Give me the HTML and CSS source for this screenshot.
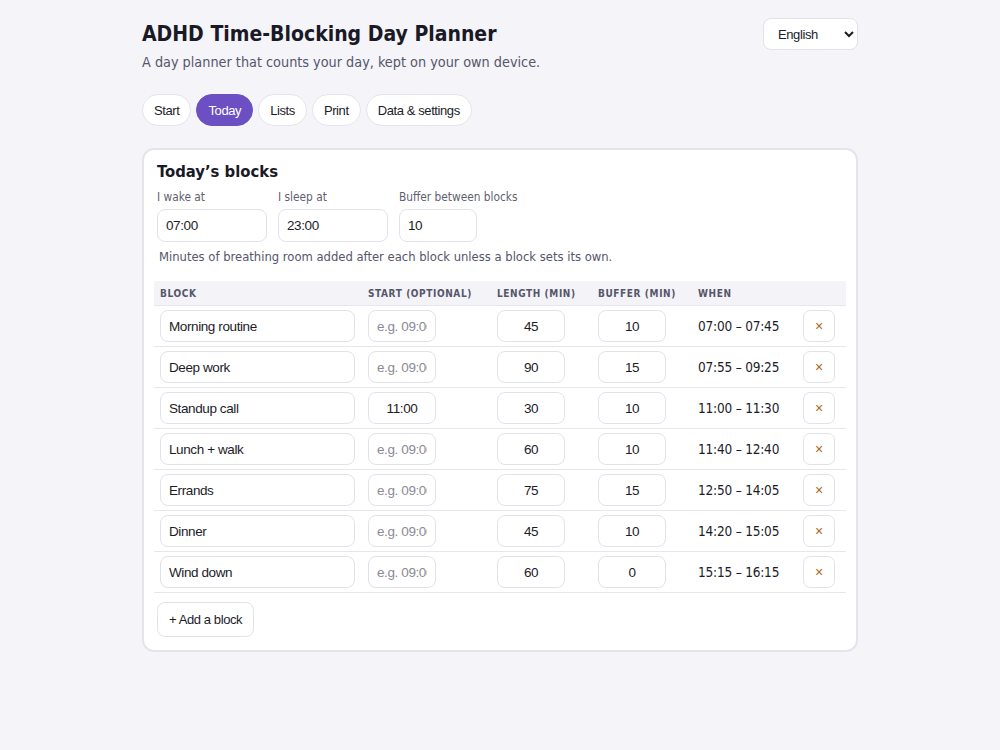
FILE: index.html
```html
<!DOCTYPE html>
<html lang="en">
<head>
    <meta charset="UTF-8">
    <meta name="viewport" content="width=device-width, initial-scale=1.0">
    <title>ADHD Time-Blocking Day Planner</title>
    <link rel="stylesheet" href="styles.css">
</head>
<body>
    <div class="page">
        <header class="top">
            <div>
                <h1>ADHD Time-Blocking Day Planner</h1>
                <p class="tagline">A day planner that counts your day, kept on your own device.</p>
            </div>
            <select class="lang">
                <option>English</option>
            </select>
        </header>

        <nav class="tabs">
            <button class="tab">Start</button>
            <button class="tab active">Today</button>
            <button class="tab">Lists</button>
            <button class="tab">Print</button>
            <button class="tab">Data &amp; settings</button>
        </nav>

        <section class="card">
            <div class="intro">
                <h2>Today’s blocks</h2>
                <div class="day-fields">
                    <label class="field">
                        <span>I wake at</span>
                        <input class="wide" type="text" value="07:00">
                    </label>
                    <label class="field">
                        <span>I sleep at</span>
                        <input class="wide" type="text" value="23:00">
                    </label>
                    <label class="field">
                        <span>Buffer between blocks</span>
                        <input class="short" type="text" value="10">
                    </label>
                </div>
                <p class="hint">Minutes of breathing room added after each block unless a block sets its own.</p>
            </div>

            <table class="blocks">
                <colgroup>
                    <col style="width: 208px">
                    <col style="width: 129px">
                    <col style="width: 101px">
                    <col style="width: 100px">
                    <col style="width: 105px">
                    <col style="width: 49px">
                </colgroup>
                <thead>
                    <tr>
                        <th>Block</th>
                        <th>Start (optional)</th>
                        <th>Length (min)</th>
                        <th>Buffer (min)</th>
                        <th>When</th>
                        <th></th>
                    </tr>
                </thead>
                <tbody id="rows"></tbody>
            </table>

            <button class="add">+ Add a block</button>
        </section>
    </div>

    <script>
        const blocks = [
            { name: 'Morning routine', start: '', length: 45, buffer: 10, when: '07:00 – 07:45' },
            { name: 'Deep work', start: '', length: 90, buffer: 15, when: '07:55 – 09:25' },
            { name: 'Standup call', start: '11:00', length: 30, buffer: 10, when: '11:00 – 11:30' },
            { name: 'Lunch + walk', start: '', length: 60, buffer: 10, when: '11:40 – 12:40' },
            { name: 'Errands', start: '', length: 75, buffer: 15, when: '12:50 – 14:05' },
            { name: 'Dinner', start: '', length: 45, buffer: 10, when: '14:20 – 15:05' },
            { name: 'Wind down', start: '', length: 60, buffer: 0, when: '15:15 – 16:15' }
        ];

        const rows = document.getElementById('rows');
        rows.innerHTML = blocks.map(b => `
            <tr>
                <td><input class="name" type="text" value="${b.name}"></td>
                <td><input class="num" type="text" placeholder="e.g. 09:00" value="${b.start}"></td>
                <td><input class="num" type="text" value="${b.length}"></td>
                <td><input class="num" type="text" value="${b.buffer}"></td>
                <td class="when">${b.when}</td>
                <td><button class="remove">×</button></td>
            </tr>
        `).join('');
    </script>
</body>
</html>
```

FILE: styles.css
```css
body {
    margin: 0;
    background: #f4f4f9;
    color: #1c1c28;
    font-family: 'DejaVu Sans Condensed', 'DejaVu Sans', sans-serif;
    font-stretch: condensed;
}
.page {
    width: 716px;
    margin: 0 auto;
    padding-top: 21px;
}
.top {
    display: flex;
    justify-content: space-between;
    align-items: flex-start;
}
h1 {
    font-size: 21px;
    line-height: 26px;
    margin: 0;
    color: #1a1a26;
}
.tagline {
    font-size: 14.3px;
    line-height: 18px;
    margin: 6px 0 0;
    color: #55566a;
}
/* form controls use the Arial-style face */
.lang, .tab, input, .remove, .add {
    font-family: 'Liberation Sans', sans-serif;
    font-stretch: normal;
    font-size: 13px;
    letter-spacing: -0.4px;
    color: #1c1c28;
}
.lang {
    width: 95px;
    height: 32px;
    margin-top: -3px;
    padding: 0 6px 0 10px;
    background: white;
    border: 1px solid #e2e2ea;
    border-radius: 8px;
}
.tabs {
    display: flex;
    gap: 5px;
    margin-top: 23px;
}
.tab {
    height: 32px;
    padding: 0 11px;
    background: white;
    border: 1px solid #e4e4ec;
    border-radius: 16px;
}
.tab.active {
    background: #6c4fc2;
    border-color: #6c4fc2;
    color: white;
}
.card {
    margin-top: 22px;
    background: white;
    border: 2px solid #e4e4ec;
    border-radius: 12px;
    padding: 12px 10px 13px;
}
.intro {
    padding: 0 3px;
}
h2 {
    font-size: 16.5px;
    line-height: 20px;
    margin: 0;
    color: #1a1a26;
}
.day-fields {
    display: flex;
    gap: 11px;
    margin-top: 8px;
}
.field span {
    display: block;
    font-size: 11.8px;
    line-height: 14px;
    color: #5f5f70;
    margin-bottom: 5px;
}
input {
    box-sizing: border-box;
    height: 33px;
    border: 1px solid #e2e2ea;
    border-radius: 8px;
    font-size: 13.5px;
    padding: 0 8px;
    background: white;
}
input::placeholder {
    color: #8a8a96;
}
.wide {
    width: 110px;
}
.short {
    width: 78px;
}
.hint {
    font-size: 12.9px;
    line-height: 16px;
    margin: 7px 0 0 2px;
    color: #55566a;
}
.blocks {
    width: 692px;
    margin-top: 16px;
    border-collapse: collapse;
    table-layout: fixed;
}
.blocks th {
    background: #f3f3f8;
    height: 24px;
    padding: 0 6px;
    text-align: left;
    font-size: 10px;
    letter-spacing: 0.6px;
    text-transform: uppercase;
    color: #55566a;
    border-bottom: 1px solid #e6e6ee;
}
.blocks td {
    height: 40px;
    padding: 0 6px;
    border-bottom: 1px solid #e6e6ee;
}
.blocks input {
    height: 32px;
}
.name {
    width: 195px;
}
.num {
    width: 68px;
    text-align: center;
}
.when {
    font-size: 13.5px;
    color: #1c1c28;
    padding-left: 7px;
    letter-spacing: -0.2px;
}
.remove {
    width: 32px;
    height: 32px;
    background: white;
    border: 1px solid #e2e2ea;
    border-radius: 7px;
    color: #b0651e;
    font-size: 14px;
    padding: 0;
}
.add {
    margin: 9px 0 0 3px;
    height: 35px;
    padding: 0 11px;
    background: white;
    border: 1px solid #e2e2ea;
    border-radius: 8px;
}
```
